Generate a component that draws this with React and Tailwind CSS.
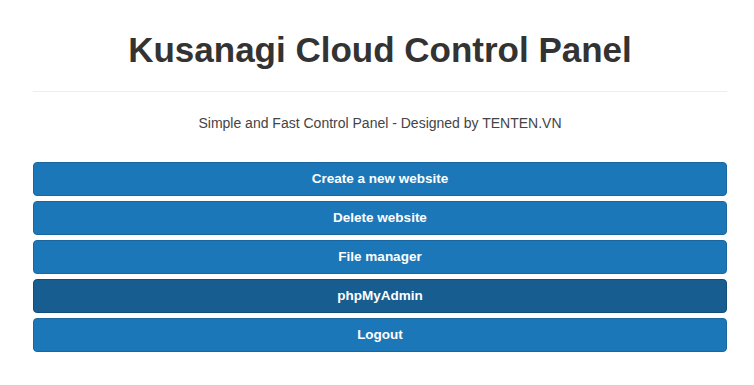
export default function App() {
  const items = [
    { label: 'Create a new website' },
    { label: 'Delete website' },
    { label: 'File manager' },
    { label: 'phpMyAdmin', active: true },
    { label: 'Logout' },
  ]

  return (
    <div className="min-h-[385px] bg-white pl-[33px] pr-[27px] font-['Liberation_Sans',Arial,sans-serif] text-[#333]">
      <div className="pt-[28px] pb-[19px] border-b border-[#eee] text-center">
        <h1 className="text-[35px] leading-[44px] font-bold text-[#333]">Kusanagi Cloud Control Panel</h1>
      </div>
      <p className="mt-[21px] text-center text-[14px] leading-[20px] text-[#444]">
        Simple and Fast Control Panel - Designed by TENTEN.VN
      </p>
      <div className="mt-[29px] flex flex-col gap-[5px]">
        {items.map((it) => (
          <button
            key={it.label}
            className={`h-[34px] w-full rounded-[4px] border text-[13.5px] font-bold text-white ${
              it.active ? 'bg-[#175d90] border-[#124d79]' : 'bg-[#1c77b8] border-[#1a67a0]'
            }`}
          >
            {it.label}
          </button>
        ))}
      </div>
    </div>
  )
}
